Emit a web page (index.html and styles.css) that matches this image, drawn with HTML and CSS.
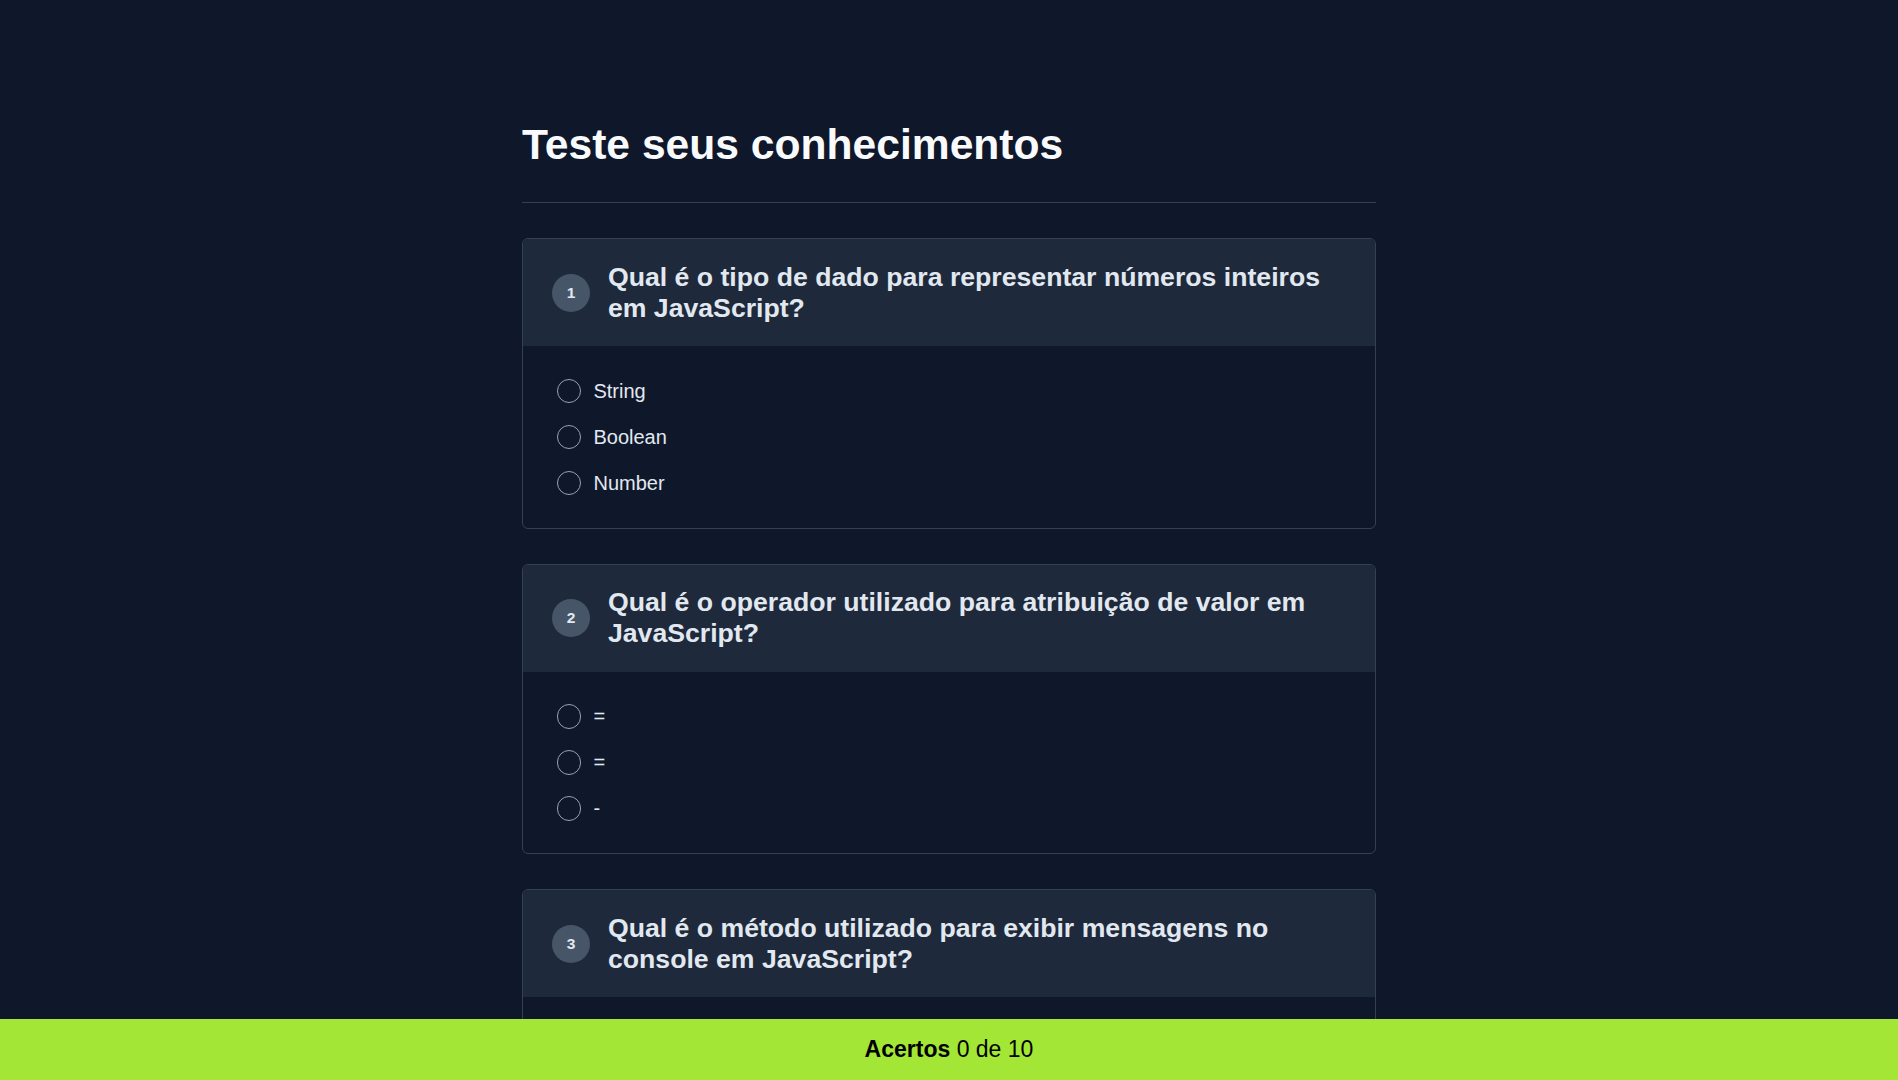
FILE: index.html
```html
<!DOCTYPE html>
<html lang="pt-BR">
<head>
<meta charset="utf-8">
<title>Teste seus conhecimentos</title>
<link rel="stylesheet" href="styles.css">
</head>
<body>
<main class="quiz">
  <header class="quiz-head">
    <h1 class="quiz-title">Teste seus conhecimentos</h1>
  </header>

  <section class="card">
    <div class="card-head">
      <span class="badge">1</span>
      <h2 class="question">Qual é o tipo de dado para representar números inteiros em JavaScript?</h2>
    </div>
    <div class="card-body">
      <label class="option"><input type="radio" name="q1" class="radio"><span>String</span></label>
      <label class="option"><input type="radio" name="q1" class="radio"><span>Boolean</span></label>
      <label class="option"><input type="radio" name="q1" class="radio"><span>Number</span></label>
    </div>
  </section>

  <section class="card">
    <div class="card-head">
      <span class="badge">2</span>
      <h2 class="question">Qual é o operador utilizado para atribuição de valor em JavaScript?</h2>
    </div>
    <div class="card-body">
      <label class="option"><input type="radio" name="q2" class="radio"><span>=</span></label>
      <label class="option"><input type="radio" name="q2" class="radio"><span>=</span></label>
      <label class="option"><input type="radio" name="q2" class="radio"><span>-</span></label>
    </div>
  </section>

  <section class="card">
    <div class="card-head">
      <span class="badge">3</span>
      <h2 class="question">Qual é o método utilizado para exibir mensagens no console em JavaScript?</h2>
    </div>
    <div class="card-body">
      <label class="option"><input type="radio" name="q3" class="radio"><span>console.log()</span></label>
      <label class="option"><input type="radio" name="q3" class="radio"><span>print()</span></label>
      <label class="option"><input type="radio" name="q3" class="radio"><span>alert()</span></label>
    </div>
  </section>
</main>

<footer class="score">
  <span><strong>Acertos</strong> 0 de 10</span>
</footer>
</body>
</html>
```
FILE: styles.css
```css
* { box-sizing: border-box; }

html, body {
  margin: 0;
  padding: 0;
}

body {
  background: #0f172a;
  color: #e2e8f0;
  font-family: "Liberation Sans", Arial, sans-serif;
}

.quiz {
  width: 45%;
  margin: 0 auto;
  padding: 119px 0 120px;
}

.quiz-head {
  border-bottom: 1px solid #334155;
  padding-bottom: 33px;
  margin-bottom: 35px;
}

.quiz-title {
  margin: 0;
  font-size: 42.6px;
  line-height: 50.4px;
  font-weight: 700;
  color: #f8fafc;
}

.card {
  border: 1px solid #334155;
  border-radius: 6px;
  overflow: hidden;
  margin-bottom: 35px;
}

.card-head {
  display: flex;
  align-items: center;
  gap: 18px;
  background: #1e293b;
  padding: 22.3px 29px;
}

.badge {
  flex: none;
  width: 38px;
  height: 38px;
  border-radius: 50%;
  background: #475569;
  color: #e2e8f0;
  font-size: 15.5px;
  font-weight: 700;
  display: flex;
  align-items: center;
  justify-content: center;
}

.question {
  margin: 0;
  font-size: 26.65px;
  line-height: 31.2px;
  font-weight: 700;
  color: #e2e8f0;
}

.card-body {
  display: flex;
  flex-direction: column;
  gap: 21.5px;
  padding: 32.5px 34px 32.5px;
}

.option {
  display: flex;
  align-items: center;
  gap: 12px;
  font-size: 20px;
  line-height: 23px;
  color: #e2e8f0;
}

.radio {
  appearance: none;
  -webkit-appearance: none;
  margin: 0;
  width: 24.5px;
  height: 24.5px;
  border: 1.5px solid #94a3b8;
  border-radius: 50%;
  background: transparent;
  flex: none;
}

.score {
  position: fixed;
  left: 0;
  right: 0;
  bottom: 0;
  height: 61px;
  background: #a3e635;
  color: #000;
  display: flex;
  align-items: center;
  justify-content: center;
  font-size: 23px;
}
```
